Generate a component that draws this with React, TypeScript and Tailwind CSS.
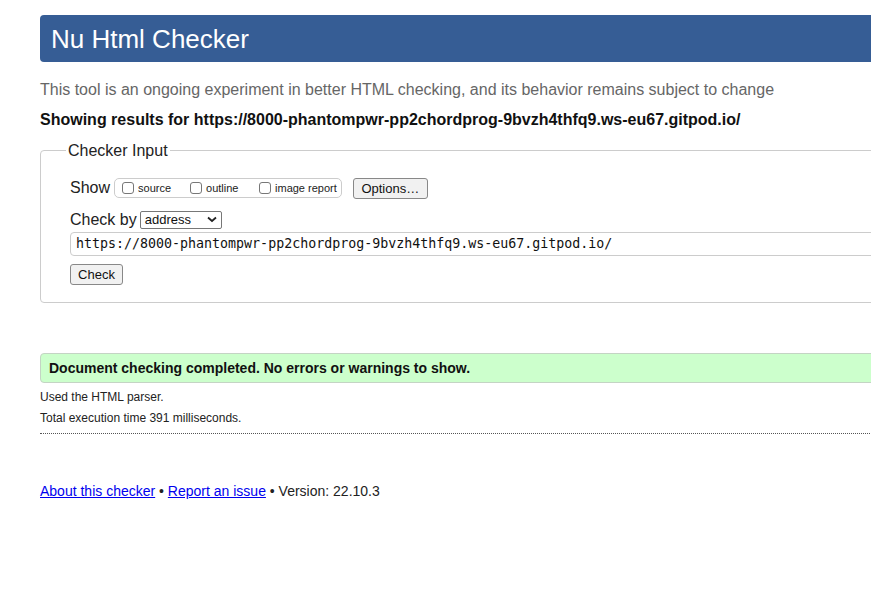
import React from "react";

export default function App() {
  const url = "https://8000-phantompwr-pp2chordprog-9bvzh4thfq9.ws-eu67.gitpod.io/";
  const box = <span className="w-[12px] h-[12px] border border-[#777] rounded-[3px] mr-[4px] inline-block shrink-0" />;
  return (
    <div className="w-[871px] h-[604px] overflow-hidden bg-white" style={{ fontFamily: '"Liberation Sans", Arial, sans-serif' }}>
      <div className="w-[1000px] pl-[40px] pt-[15px]">
        <div className="h-[47px] bg-[#365d95] rounded-l-[4px] flex items-center pl-[11px]">
          <h1 className="text-white text-[26px] leading-none">Nu Html Checker</h1>
        </div>
        <p className="mt-[18px] text-[16px] text-[#666] leading-[19px]">
          This tool is an ongoing experiment in better HTML checking, and its behavior remains subject to change
        </p>
        <p className="mt-[11px] text-[16px] font-bold text-[#111] leading-[19px]">Showing results for {url}</p>
        <fieldset className="mt-[12px] border border-[#ccc] rounded-[4px] pl-[29px] pr-[10px] pb-[16px] pt-[4px]">
          <legend className="ml-[-4px] px-[2px] text-[16px] text-[#222] leading-[19px]">Checker Input</legend>
          <div className="flex items-center mt-[13px] h-[22px]">
            <span className="text-[16px] text-[#222] mr-[4px]">Show</span>
            <div className="flex items-center h-[20px] border border-[#ccc] rounded-[5px] pl-[7px] pr-[4px] text-[11px] text-[#222]">
              <label className="flex items-center w-[68px]">{box}source</label>
              <label className="flex items-center w-[69px]">{box}outline</label>
              <label className="flex items-center">{box}image report</label>
            </div>
            <button className="ml-[11px] h-[21px] w-[75px] border border-[#888] rounded-[3px] bg-[#f1f1f1] text-[13px] text-[#111]">Options…</button>
          </div>
          <div className="flex items-center mt-[11px] h-[19px]">
            <span className="text-[16px] text-[#222] mr-[3px]">Check by</span>
            <div className="h-[18px] w-[82px] border border-[#777] rounded-[2px] flex items-center justify-between px-[4px] text-[13px] text-[#111]">
              <span>address</span>
              <svg width="10" height="7" viewBox="0 0 10 7"><path d="M1 1.5 L5 5 L9 1.5" stroke="#222" strokeWidth="1.8" fill="none" /></svg>
            </div>
          </div>
          <div className="mt-[3px] h-[24px] border border-[#ccc] rounded-l-[4px] flex items-center pl-[5px] text-[13.3px] text-[#111]" style={{ fontFamily: '"DejaVu Sans Mono", monospace' }}>
            {url}
          </div>
          <button className="mt-[8px] h-[21px] w-[53px] border border-[#888] rounded-[3px] bg-[#f1f1f1] text-[13px] text-[#111]">Check</button>
        </fieldset>
        <div className="mt-[50px] h-[30px] bg-[#ccffcc] border border-[#c4d4c4] rounded-l-[4px] flex items-center pl-[8px] text-[14px] font-bold text-[#111]">
          Document checking completed. No errors or warnings to show.
        </div>
        <p className="mt-[7px] text-[12px] text-[#222] leading-[14px]">Used the HTML parser.</p>
        <p className="mt-[7px] text-[12px] text-[#222] leading-[14px]">Total execution time 391 milliseconds.</p>
        <div className="mt-[8px] border-b border-dotted border-[#555]" />
        <p className="mt-[47px] text-[14px] text-[#222]">
          <a href="#" className="text-[#0000ee] underline">About this checker</a> • <a href="#" className="text-[#0000ee] underline">Report an issue</a> • Version: 22.10.3
        </p>
      </div>
    </div>
  );
}
